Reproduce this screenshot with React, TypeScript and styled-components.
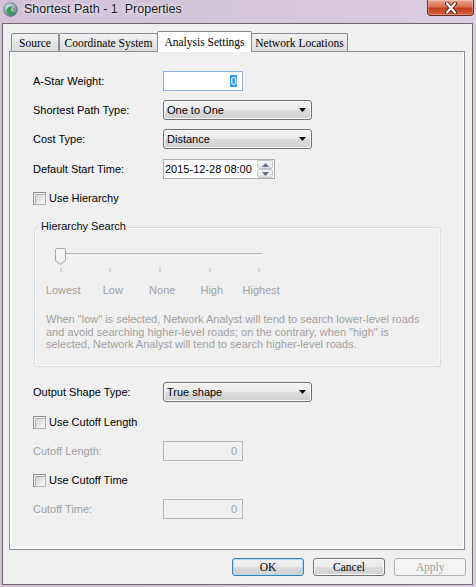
import React from "react";
import styled, { createGlobalStyle } from "styled-components";

const GlobalStyle = createGlobalStyle`
  * { box-sizing: border-box; }
  html, body { margin: 0; padding: 0; background: #d8c9dc; }
  body {
    width: 476px;
    height: 587px;
    overflow: hidden;
    font-family: "Liberation Sans", Arial, sans-serif;
  }
`;

const Window = styled.div`
  width: 476px;
  height: 587px;
  display: flex;
  flex-direction: column;
  padding: 0 3px 2px 2px;
  background: linear-gradient(90deg, #d3c2d7 0%, #d1c3d8 35%, #d6c7db 65%, #ddcee1 100%);
`;

const TitleBar = styled.div`
  height: 23px;
  flex: none;
  display: flex;
  align-items: flex-start;
  padding-top: 2px;
`;

const IconBox = styled.div`
  width: 15px;
  height: 15px;
  margin-left: 1px;
  flex: none;
  display: flex;
`;

const Title = styled.div`
  margin-left: 6px;
  font-family: "Liberation Sans", Arial, sans-serif;
  font-size: 12.5px;
  line-height: 15px;
  color: #151515;
  white-space: pre;
  text-shadow: 0 0 6px rgba(255, 255, 255, 0.9), 0 0 2px rgba(255, 255, 255, 0.8);
`;

const CloseButton = styled.div`
  margin-left: auto;
  margin-top: -2px;
  margin-right: -1px;
  width: 47px;
  height: 16px;
  border: 1px solid #6a2a1d;
  border-top: none;
  border-radius: 0 0 4px 4px;
  background: linear-gradient(#eaa591, #d86f52 45%, #c13d1e 55%, #d7673f);
  box-shadow: inset 0 0 0 1px rgba(255, 255, 255, 0.3);
  display: flex;
  align-items: center;
  justify-content: center;
`;

const Client = styled.div`
  flex: 1;
  display: flex;
  flex-direction: column;
  border: 1px solid #6a6a6a;
  background: #f0f0f0;
  padding: 7px 7px 8px 6px;
`;

const TabStrip = styled.div`
  height: 20px;
  flex: none;
  display: flex;
  align-items: flex-end;
  padding-left: 2px;
`;

const Tab = styled.div<{ $w: number; $active?: boolean }>`
  position: relative;
  width: ${(p) => p.$w}px;
  height: ${(p) => (p.$active ? 21 : 18)}px;
  margin: ${(p) => (p.$active ? "0 -1px -1px -1px" : "0")};
  z-index: ${(p) => (p.$active ? 1 : 0)};
  border: 1px solid #898c95;
  border-bottom: none;
  border-radius: 2px 2px 0 0;
  background: ${(p) => (p.$active ? "#ffffff" : "linear-gradient(#f3f3f3, #e6e6e6 55%, #dcdcdc)")};
  display: flex;
  align-items: ${(p) => (p.$active ? "flex-start" : "center")};
  padding-top: ${(p) => (p.$active ? 3 : 0)}px;
  justify-content: center;
  font-family: "Liberation Serif", "Times New Roman", serif;
  font-size: 11.5px;
  line-height: 14px;
  color: #000;
  white-space: nowrap;
`;

const TabPage = styled.div`
  height: 499px;
  flex: none;
  border: 1px solid #898c95;
  background: #f0f0f0;
  box-shadow: inset 2px 0 0 #ffffff, inset 0 -2px 0 #ffffff, inset -1px 0 0 #ffffff;
  padding: 19px 0 0 23px;
  display: flex;
  flex-direction: column;
`;

const Row = styled.div<{ $mt: number }>`
  height: 20px;
  margin-top: ${(p) => p.$mt}px;
  display: flex;
  align-items: center;
  flex: none;
`;

const Label = styled.div<{ $disabled?: boolean }>`
  width: 130px;
  flex: none;
  font-size: 11px;
  line-height: 13px;
  color: ${(p) => (p.$disabled ? "#a0a0a0" : "#000")};
  white-space: nowrap;
`;

const TextBox = styled.div<{ $w: number; $tone?: "focus" | "disabled" | "normal" }>`
  width: ${(p) => p.$w}px;
  height: 20px;
  border: 1px solid
    ${(p) => (p.$tone === "focus" ? "#8fb3e0" : p.$tone === "disabled" ? "#b4b7ba" : "#abadb3")};
  background: ${(p) => (p.$tone === "disabled" ? "#f0f0f0" : "#ffffff")};
  display: flex;
  align-items: center;
  justify-content: ${(p) => (p.$tone === "normal" ? "flex-start" : "flex-end")};
  padding: ${(p) => (p.$tone === "normal" ? "0 1px 0 1px" : "0 5px 0 2px")};
  font-size: 11px;
  color: ${(p) => (p.$tone === "disabled" ? "#a0a0a0" : "#000")};
`;

const Selected = styled.span`
  background: #3399ff;
  color: #fff;
  line-height: 12px;
  padding: 0 0.5px;
`;

const SpinBox = styled.div`
  margin-left: auto;
  width: 16px;
  height: 18px;
  display: flex;
  flex-direction: column;
`;

const SpinBtn = styled.div`
  flex: 1;
  border: 1px solid #c2c7cd;
  border-radius: 2px;
  background: linear-gradient(#f7f7f7, #e4e4e4);
  display: flex;
  align-items: center;
  justify-content: center;
`;

const Combo = styled.div`
  width: 149px;
  height: 20px;
  border: 1px solid #707070;
  border-radius: 3px;
  background: linear-gradient(#f2f2f2, #ebebeb 50%, #dddddd 50%, #cfcfcf);
  box-shadow: inset 0 0 0 1px #fbfbfb;
  display: flex;
  align-items: center;
  padding: 0 5px 0 3px;
  font-size: 11px;
  color: #000;
`;

const ComboText = styled.span`
  flex: 1;
`;

const CheckRow = styled.div<{ $mt: number }>`
  height: 20px;
  margin-top: ${(p) => p.$mt}px;
  display: flex;
  align-items: center;
  gap: 3px;
  font-size: 11px;
  color: #000;
`;

const CheckBox = styled.div`
  position: relative;
  width: 13px;
  height: 13px;
  flex: none;
  border: 1px solid #8e8f8f;
  background: #f4f4f4;
  &::after {
    content: "";
    position: absolute;
    left: 1px;
    top: 1px;
    width: 9px;
    height: 9px;
    border: 1px solid #b0b4b9;
    background: linear-gradient(135deg, #cfcfcf 0%, #e7e7e7 50%, #fbfbfb 100%);
  }
`;

const GroupBox = styled.div`
  position: relative;
  margin-top: 19px;
  margin-left: 1px;
  width: 407px;
  height: 140px;
  flex: none;
  border: 1px solid #d5dfe5;
  border-radius: 3px;
  box-shadow: inset 0 0 0 1px #fafafa;
  display: flex;
  flex-direction: column;
`;

const Legend = styled.div`
  position: absolute;
  top: -8px;
  left: 4px;
  padding: 0 2px;
  background: #f0f0f0;
  font-size: 11px;
  line-height: 13px;
  color: #0a0a14;
`;

const SliderArt = styled.svg`
  margin: 20px 0 0 20px;
  display: block;
  flex: none;
`;

const TickLabels = styled.div`
  margin: 10px 0 0 3.5px;
  display: grid;
  grid-template-columns: repeat(5, 49.5px);
  font-size: 11px;
  line-height: 13px;
  color: #a0a0a0;
  text-align: center;
`;

const Description = styled.div`
  margin: 16px 0 0 11px;
  font-size: 11px;
  line-height: 12.7px;
  color: #a0a0a0;
  white-space: nowrap;
`;

const ButtonRow = styled.div`
  margin-top: 8px;
  height: 18px;
  flex: none;
  display: flex;
  justify-content: flex-end;
  gap: 9px;
  margin-right: -1px;
`;

const Button = styled.div<{ $kind?: "default" | "disabled" }>`
  width: 72px;
  height: 18px;
  display: flex;
  align-items: center;
  justify-content: center;
  border: 1px solid
    ${(p) => (p.$kind === "default" ? "#3c7fb1" : p.$kind === "disabled" ? "#adb2b5" : "#707070")};
  border-radius: 3px;
  background: ${(p) =>
    p.$kind === "disabled"
      ? "#f4f4f4"
      : "linear-gradient(#f2f2f2, #ebebeb 50%, #dddddd 50%, #cfcfcf)"};
  box-shadow: inset 0 0 0 1px ${(p) => (p.$kind === "default" ? "#a9dcf5" : p.$kind === "disabled" ? "#f4f4f4" : "#fbfbfb")};
  font-family: "Liberation Serif", "Times New Roman", serif;
  font-size: 11.5px;
  color: ${(p) => (p.$kind === "disabled" ? "#a0a0a0" : "#000")};
`;

const AppIcon = () => (
  <svg width="15" height="15" viewBox="0 0 15 15">
    <defs>
      <radialGradient id="gl" cx="40%" cy="35%" r="70%">
        <stop offset="0%" stopColor="#e9f3f6" />
        <stop offset="60%" stopColor="#8fa9b4" />
        <stop offset="100%" stopColor="#4e6773" />
      </radialGradient>
    </defs>
    <circle cx="7.5" cy="7.5" r="7" fill="url(#gl)" />
    <path d="M3.5 8.5 C4 5 7 3.5 10 4.5 C8 5.5 7.5 7 8.5 9 C9.5 10.5 11.5 10.5 12.5 9 C12 12 8.5 13.5 6 12.2 C4.5 11.5 3.6 10 3.5 8.5 Z" fill="#2f9a54" />
    <path d="M9 6.5 L11.5 5.8 L10.8 8.2 Z" fill="#e06a2a" />
    <circle cx="7.5" cy="7.5" r="6.8" fill="none" stroke="#5e7884" strokeWidth="0.6" />
  </svg>
);

const CloseGlyph = () => (
  <svg width="16" height="12" viewBox="0 0 16 12">
    <path d="M4 1.5 L12 10.5 M12 1.5 L4 10.5" stroke="#4a1a12" strokeWidth="4" strokeLinecap="round" />
    <path d="M4 1.5 L12 10.5 M12 1.5 L4 10.5" stroke="#ffffff" strokeWidth="2.2" strokeLinecap="round" />
  </svg>
);

const ComboArrow = () => (
  <svg width="7" height="4" viewBox="0 0 7 4">
    <path d="M0 0 H7 L3.5 4 Z" fill="#000" />
  </svg>
);

const SpinArrow = ({ up }: { up?: boolean }) => (
  <svg width="7" height="4" viewBox="0 0 7 4">
    <path d={up ? "M0 4 H7 L3.5 0 Z" : "M0 0 H7 L3.5 4 Z"} fill="#5a6f93" />
  </svg>
);

const ticks = [6, 55, 105, 155, 204];

const Slider = () => (
  <SliderArt width="215" height="26" viewBox="0 0 215 26">
    <defs>
      <linearGradient id="th" x1="0" y1="0" x2="0" y2="1">
        <stop offset="0%" stopColor="#fbfbfb" />
        <stop offset="100%" stopColor="#ececec" />
      </linearGradient>
    </defs>
    <rect x="3" y="5" width="205" height="1.4" fill="#b3b3b3" />
    <rect x="3" y="6.4" width="205" height="1" fill="#ffffff" />
    {ticks.map((x) => (
      <rect key={x} x={x - 0.5} y="20" width="1" height="4" fill="#b8b8b8" />
    ))}
    <path
      d="M0.5 2 Q0.5 0.5 2 0.5 H9 Q10.5 0.5 10.5 2 V12.5 L5.5 16.5 L0.5 12.5 Z"
      fill="url(#th)"
      stroke="#a6a6a6"
      strokeWidth="1"
    />
  </SliderArt>
);

export default function App() {
  return (
    <>
      <GlobalStyle />
      <Window>
        <TitleBar>
          <IconBox>
            <AppIcon />
          </IconBox>
          <Title>{"Shortest Path - 1  Properties"}</Title>
          <CloseButton>
            <CloseGlyph />
          </CloseButton>
        </TitleBar>
        <Client>
          <TabStrip>
            <Tab $w={48}>Source</Tab>
            <Tab $w={99}>Coordinate System</Tab>
            <Tab $w={95} $active>
              Analysis Settings
            </Tab>
            <Tab $w={97}>Network Locations</Tab>
          </TabStrip>
          <TabPage>
            <Row $mt={0}>
              <Label>A-Star Weight:</Label>
              <TextBox $w={80} $tone="focus">
                <Selected>0</Selected>
              </TextBox>
            </Row>
            <Row $mt={9}>
              <Label>Shortest Path Type:</Label>
              <Combo>
                <ComboText>One to One</ComboText>
                <ComboArrow />
              </Combo>
            </Row>
            <Row $mt={9}>
              <Label>Cost Type:</Label>
              <Combo>
                <ComboText>Distance</ComboText>
                <ComboArrow />
              </Combo>
            </Row>
            <Row $mt={10}>
              <Label>Default Start Time:</Label>
              <TextBox $w={112} $tone="normal">
                2015-12-28 08:00
                <SpinBox>
                  <SpinBtn>
                    <SpinArrow up />
                  </SpinBtn>
                  <SpinBtn>
                    <SpinArrow />
                  </SpinBtn>
                </SpinBox>
              </TextBox>
            </Row>
            <CheckRow $mt={9}>
              <CheckBox />
              Use Hierarchy
            </CheckRow>
            <GroupBox>
              <Legend>Hierarchy Search</Legend>
              <Slider />
              <TickLabels>
                <span>Lowest</span>
                <span>Low</span>
                <span>None</span>
                <span>High</span>
                <span>Highest</span>
              </TickLabels>
              <Description>
                When "low" is selected, Network Analyst will tend to search lower-level roads
                <br />
                and avoid searching higher-level roads; on the contrary, when "high" is
                <br />
                selected, Network Analyst will tend to search higher-level roads.
              </Description>
            </GroupBox>
            <Row $mt={15}>
              <Label>Output Shape Type:</Label>
              <Combo>
                <ComboText>True shape</ComboText>
                <ComboArrow />
              </Combo>
            </Row>
            <CheckRow $mt={10}>
              <CheckBox />
              Use Cutoff Length
            </CheckRow>
            <Row $mt={9}>
              <Label $disabled>Cutoff Length:</Label>
              <TextBox $w={80} $tone="disabled">
                0
              </TextBox>
            </Row>
            <CheckRow $mt={9}>
              <CheckBox />
              Use Cutoff Time
            </CheckRow>
            <Row $mt={9}>
              <Label $disabled>Cutoff Time:</Label>
              <TextBox $w={80} $tone="disabled">
                0
              </TextBox>
            </Row>
          </TabPage>
          <ButtonRow>
            <Button $kind="default">OK</Button>
            <Button>Cancel</Button>
            <Button $kind="disabled">Apply</Button>
          </ButtonRow>
        </Client>
      </Window>
    </>
  );
}
